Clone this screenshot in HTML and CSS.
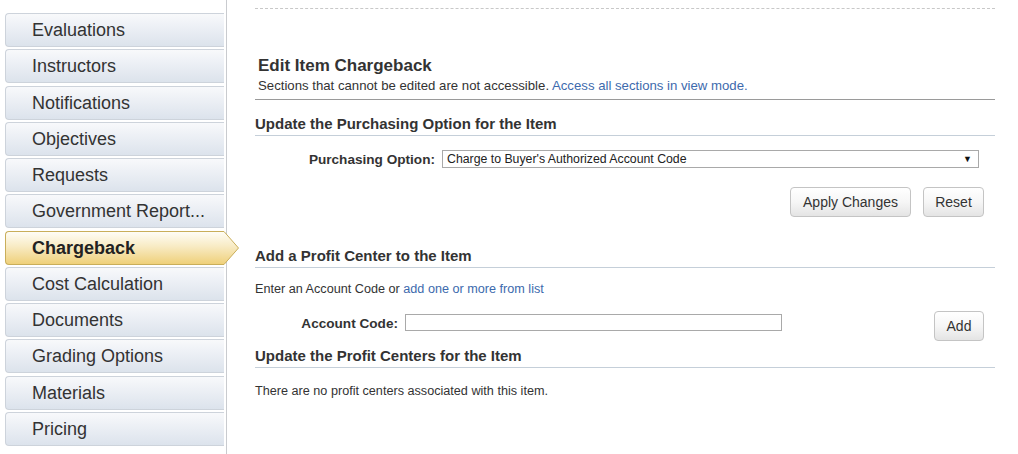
FILE: index.html
```html
<!DOCTYPE html>
<html lang="en">
<head>
<meta charset="utf-8">
<title>Edit Item Chargeback</title>
<link rel="stylesheet" href="styles.css">
</head>
<body>
<div class="page">
  <nav class="sidebar">
    <ul class="nav">
      <li class="nav-item">Evaluations</li>
      <li class="nav-item">Instructors</li>
      <li class="nav-item">Notifications</li>
      <li class="nav-item">Objectives</li>
      <li class="nav-item">Requests</li>
      <li class="nav-item">Government Report...</li>
      <li class="nav-item active">Chargeback<svg class="arrow" width="18" height="36" viewBox="0 0 18 36"><defs><linearGradient id="gold" x1="0" y1="0" x2="0" y2="1"><stop offset="0" stop-color="#fffdf6"/><stop offset="0.45" stop-color="#f8ebc4"/><stop offset="1" stop-color="#efd07a"/></linearGradient></defs><path d="M0 0.5 L2 0.5 L16.5 17 L2 33.5 L0 33.5 Z" fill="url(#gold)"/><path d="M0 0.5 L2 0.5 L16.5 17 L2 33.5 L0 33.5" fill="none" stroke="#c9ae5a" stroke-width="1"/></svg></li>
      <li class="nav-item">Cost Calculation</li>
      <li class="nav-item">Documents</li>
      <li class="nav-item">Grading Options</li>
      <li class="nav-item">Materials</li>
      <li class="nav-item">Pricing</li>
    </ul>
  </nav>
  <main class="main">
    <div class="topline"></div>
    <div class="title-block">
      <h1 class="title">Edit Item Chargeback</h1>
      <p class="subtitle">Sections that cannot be edited are not accessible. <a class="link" href="#">Access all sections in view mode.</a></p>
    </div>

    <h2 class="section-head first">Update the Purchasing Option for the Item</h2>
    <div class="field-row purchase-row">
      <label class="field-label purchase-label">Purchasing Option:</label>
      <div class="select-box"><span>Charge to Buyer's Authorized Account Code</span><span class="caret">&#9660;</span></div>
    </div>
    <div class="button-row">
      <button class="btn btn-apply">Apply Changes</button>
      <button class="btn btn-reset">Reset</button>
    </div>

    <h2 class="section-head profit">Add a Profit Center to the Item</h2>
    <p class="note">Enter an Account Code or <a class="link" href="#">add one or more from list</a></p>
    <div class="account-row">
      <label class="field-label account-label">Account Code:</label>
      <input class="text-input" type="text">
      <span class="spacer"></span>
      <button class="btn btn-add">Add</button>
    </div>

    <h2 class="section-head centers">Update the Profit Centers for the Item</h2>
    <p class="note empty">There are no profit centers associated with this item.</p>
  </main>
</div>
</body>
</html>
```
FILE: styles.css
```css
* { box-sizing: border-box; }
html, body {
  margin: 0;
  padding: 0;
  background: #fff;
  font-family: "Liberation Sans", Arial, sans-serif;
  color: #333;
}
.page {
  display: flex;
  width: 1018px;
  height: 454px;
  overflow: hidden;
}
.sidebar {
  width: 227px;
  flex: none;
  border-right: 1px solid #c9cbcf;
  padding-top: 13px;
  padding-left: 5px;
  padding-right: 2px;
}
.nav {
  list-style: none;
  margin: 0;
  padding: 0;
}
.nav-item {
  position: relative;
  height: 34px;
  margin-bottom: 2.27px;
  padding-left: 26px;
  line-height: 33px;
  font-size: 18px;
  color: #333;
  border: 1px solid #cdd3db;
  border-right: none;
  border-radius: 4px 0 0 4px;
  background: linear-gradient(#f8f9fb 0%, #eef1f6 35%, #dce3ec 100%);
  white-space: nowrap;
}
.nav-item.active {
  font-weight: bold;
  color: #222;
  border-color: #c9ae5a;
  background: linear-gradient(#fffdf6 0%, #f8ebc4 45%, #efd07a 100%);
  z-index: 2;
}
.arrow {
  position: absolute;
  right: -16px;
  top: -1px;
  overflow: visible;
}
.main {
  flex: 1;
  padding-left: 28px;
  padding-right: 23px;
}
.topline {
  margin-top: 8px;
  border-top: 1px dashed #c8c8c8;
}
.title-block {
  margin-top: 47px;
  padding-left: 3px;
  padding-bottom: 5px;
  border-bottom: 1px solid #9a9a9a;
}
.title {
  margin: 0;
  font-size: 17px;
  line-height: 20px;
  font-weight: bold;
  color: #333;
}
.subtitle {
  margin: 2px 0 0;
  font-size: 13.2px;
  line-height: 16px;
  color: #333;
}
.link {
  color: #3d6aad;
  text-decoration: none;
}
.section-head {
  margin: 0;
  font-size: 15px;
  line-height: 18px;
  font-weight: bold;
  color: #333;
  padding-bottom: 2px;
  border-bottom: 1px solid #c5cfd9;
}
.section-head.first { margin-top: 15px; }
.section-head.profit { margin-top: 30px; }
.section-head.centers { margin-top: 6px; }
.field-row {
  display: flex;
  align-items: center;
}
.purchase-row {
  margin-top: 14px;
}
.field-label {
  font-size: 13.6px;
  font-weight: bold;
  color: #333;
  text-align: right;
  flex: none;
}
.purchase-label {
  width: 180px;
  margin-right: 7px;
}
.select-box {
  width: 537px;
  height: 18px;
  border: 1px solid #a9a9a9;
  display: flex;
  align-items: center;
  justify-content: space-between;
  padding: 0 6px 0 4px;
  font-size: 12.3px;
  color: #222;
  background: #fff;
}
.caret {
  font-size: 9px;
  color: #111;
}
.button-row {
  display: flex;
  justify-content: flex-end;
  gap: 12px;
  margin-top: 19px;
  padding-right: 11px;
}
.btn {
  height: 30px;
  font-family: "Liberation Sans", Arial, sans-serif;
  font-size: 14px;
  color: #333;
  border: 1px solid #c4c4c4;
  border-radius: 4px;
  background: linear-gradient(#ffffff 0%, #f6f6f6 50%, #e4e4e4 100%);
  padding: 0 10px;
}
.btn-apply { width: 121px; }
.btn-reset { width: 61px; }
.btn-add { width: 50px; }
.note {
  margin: 14px 0 0;
  font-size: 12.65px;
  line-height: 15px;
  color: #333;
}
.account-row {
  display: flex;
  align-items: flex-start;
  margin-top: 14px;
  padding-right: 11px;
}
.account-label {
  width: 143px;
  margin-right: 7px;
  line-height: 15px;
  margin-top: 5px;
}
.text-input {
  width: 377px;
  height: 17px;
  margin: 3px 0 0;
  border: 1px solid #a9a9a9;
  padding: 0 3px;
  font-size: 12px;
}
.spacer { flex: 1; }
.empty { margin-top: 16px; }
```
